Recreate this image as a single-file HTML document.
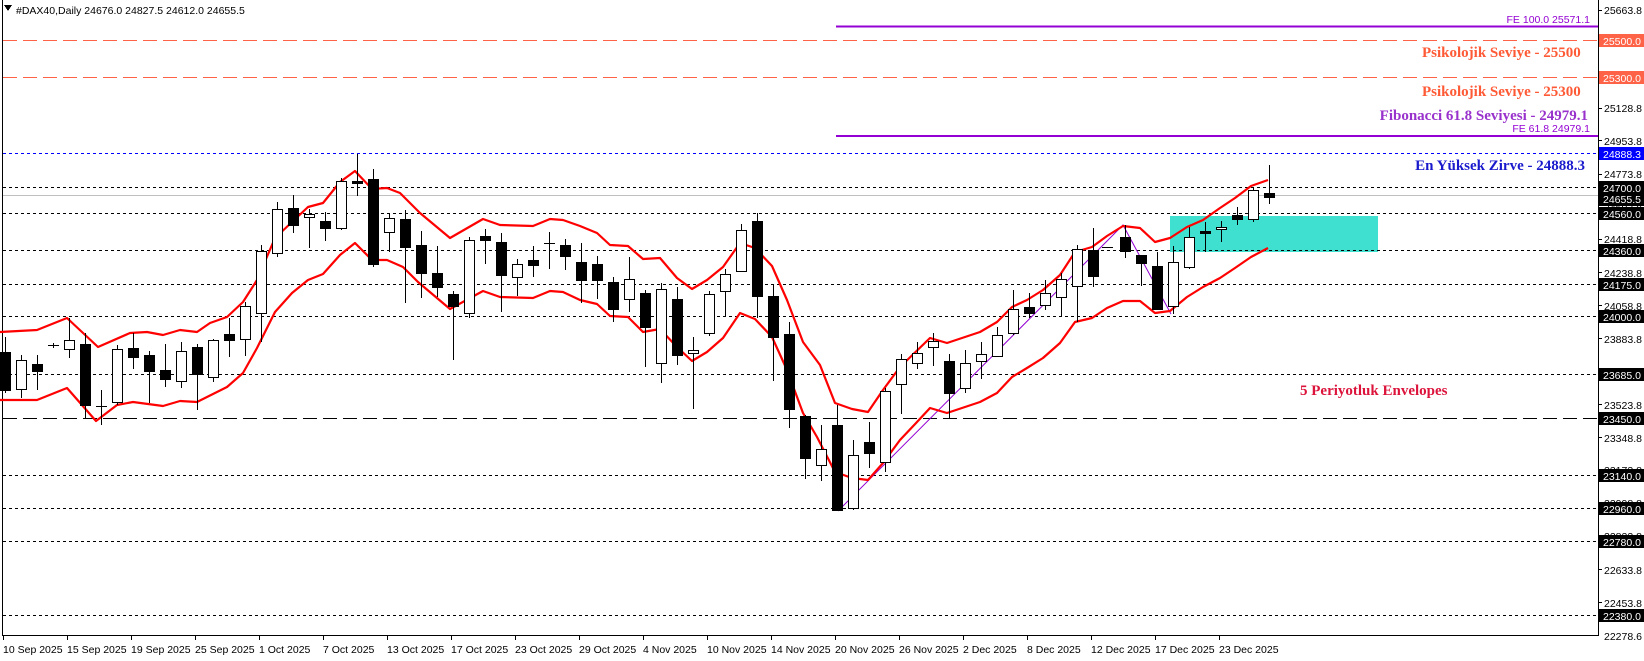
<!DOCTYPE html>
<html><head><meta charset="utf-8"><style>
html,body{margin:0;padding:0;background:#fff;width:1644px;height:661px;overflow:hidden}
svg{display:block}
text{font-family:"Liberation Sans",sans-serif;font-size:10.5px;fill:#000}
.ann{font-family:"Liberation Serif",serif;font-weight:bold;font-size:15px}
</style></head><body>
<svg width="1644" height="661" viewBox="0 0 1644 661" xmlns="http://www.w3.org/2000/svg" shape-rendering="crispEdges">
<rect width="1644" height="661" fill="#fff"/>
<line x1="2.5" y1="0" x2="2.5" y2="635" stroke="#000"/>
<line x1="2" y1="635.5" x2="1598" y2="635.5" stroke="#000"/>
<line x1="1598.5" y1="0" x2="1598.5" y2="636" stroke="#000"/>

<rect x="1170" y="216" width="208" height="36" fill="#40e0d0"/>

<g stroke-width="1" fill="none">
<line x1="836" y1="26.5" x2="1598" y2="26.5" stroke="#9400d3" stroke-width="2"/>
<line x1="3" y1="40.5" x2="1598" y2="40.5" stroke="#ff6347" stroke-dasharray="14,6"/>
<line x1="3" y1="77.5" x2="1598" y2="77.5" stroke="#ff6347" stroke-dasharray="14,6"/>
<line x1="836" y1="136" x2="1598" y2="136" stroke="#9400d3" stroke-width="2"/>
<line x1="3" y1="153.5" x2="1598" y2="153.5" stroke="#0000ff" stroke-dasharray="3,3"/>
<line x1="3" y1="187.5" x2="1598" y2="187.5" stroke="#000" stroke-dasharray="3,3"/>
<line x1="3" y1="195.5" x2="1598" y2="195.5" stroke="#c0c0c0"/>
<line x1="3" y1="213.5" x2="1598" y2="213.5" stroke="#000" stroke-dasharray="3,3"/>
<line x1="3" y1="250.5" x2="1598" y2="250.5" stroke="#000" stroke-dasharray="3,3"/>
<line x1="3" y1="284.5" x2="1598" y2="284.5" stroke="#000" stroke-dasharray="3,3"/>
<line x1="3" y1="316.5" x2="1598" y2="316.5" stroke="#000" stroke-dasharray="3,3"/>
<line x1="3" y1="374.5" x2="1598" y2="374.5" stroke="#000" stroke-dasharray="3,3"/>
<line x1="3" y1="418.5" x2="1598" y2="418.5" stroke="#000" stroke-dasharray="14,6"/>
<line x1="3" y1="475.5" x2="1598" y2="475.5" stroke="#000" stroke-dasharray="3,3"/>
<line x1="3" y1="508.5" x2="1598" y2="508.5" stroke="#000" stroke-dasharray="3,3"/>
<line x1="3" y1="541.5" x2="1598" y2="541.5" stroke="#000" stroke-dasharray="3,3"/>
<line x1="3" y1="615.5" x2="1598" y2="615.5" stroke="#000" stroke-dasharray="3,3"/>
</g>

<polyline points="838,511 1123,225 1171,314" fill="none" stroke="#9400d3" stroke-width="1" shape-rendering="auto"/>

<g fill="none" stroke="#ff0000" stroke-width="2.2" shape-rendering="auto" stroke-linejoin="round">
<polyline points="0,332 37,330 67,318 98,347 130,333 147,332 163,335 180,330 197,332 210,323 227,317 243,302 257,280 275,238 308,207 323,203 340,182 355,171 372,189 387,188 400,193 420,213 450,238 483,219 500,225 533,226 550,219 563,220 580,226 597,233 610,245 628,246 643,259 660,258 677,278 692,289 707,280 723,267 740,243 755,248 772,266 787,300 803,342 820,365 835,403 852,409 868,412 883,390 900,367 930,338 947,343 980,332 997,322 1012,307 1027,300 1043,290 1060,275 1075,252 1092,247 1107,236 1123,226 1140,228 1155,242 1170,238 1187,227 1203,220 1220,208 1235,198 1251,186 1268,180"/>
<polyline points="0,400 37,400 67,388 96,421 117,405 133,402 163,406 180,401 197,402 227,387 243,373 257,348 275,312 292,293 308,280 323,274 340,255 355,243 372,260 387,260 403,267 418,282 450,309 483,291 500,297 533,298 550,291 563,292 580,300 597,304 610,316 628,317 643,332 660,329 677,347 692,361 707,352 723,338 740,313 755,319 772,337 787,370 803,413 817,437 835,472 852,478 868,480 883,463 900,440 917,422 930,408 947,413 980,402 997,393 1012,377 1027,368 1043,358 1060,343 1075,322 1092,318 1107,308 1123,301 1140,301 1155,313 1170,311 1187,297 1203,287 1220,278 1235,268 1251,257 1268,248"/>
</g>

<g stroke="#000" stroke-width="1">
<line x1="5.5" y1="337" x2="5.5" y2="393"/><rect x="0.5" y="352.5" width="10" height="38" fill="#000"/>
<line x1="21.5" y1="355" x2="21.5" y2="398"/><rect x="16.5" y="360.5" width="10" height="29" fill="#fff"/>
<line x1="37.5" y1="355" x2="37.5" y2="390"/><rect x="32.5" y="364.5" width="10" height="7" fill="#000"/>
<line x1="53.5" y1="343" x2="53.5" y2="348"/><line x1="48" y1="345.5" x2="59" y2="345.5"/>
<line x1="69.5" y1="318" x2="69.5" y2="358"/><rect x="64.5" y="340.5" width="10" height="9" fill="#fff"/>
<line x1="85.5" y1="333" x2="85.5" y2="419"/><rect x="80.5" y="344.5" width="10" height="61" fill="#000"/>
<line x1="101.5" y1="390" x2="101.5" y2="425"/><line x1="96" y1="406.5" x2="107" y2="406.5"/>
<line x1="117.5" y1="345" x2="117.5" y2="405"/><rect x="112.5" y="349.5" width="10" height="53" fill="#fff"/>
<line x1="133.5" y1="333" x2="133.5" y2="369"/><rect x="128.5" y="348.5" width="10" height="9" fill="#000"/>
<line x1="149.5" y1="351" x2="149.5" y2="403"/><rect x="144.5" y="355.5" width="10" height="16" fill="#000"/>
<line x1="165.5" y1="344" x2="165.5" y2="387"/><rect x="160.5" y="370.5" width="10" height="9" fill="#000"/>
<line x1="181.5" y1="342" x2="181.5" y2="388"/><rect x="176.5" y="351.5" width="10" height="30" fill="#fff"/>
<line x1="197.5" y1="344" x2="197.5" y2="410"/><rect x="192.5" y="347.5" width="10" height="27" fill="#000"/>
<line x1="213.5" y1="339" x2="213.5" y2="382"/><rect x="208.5" y="340.5" width="10" height="37" fill="#fff"/>
<line x1="229.5" y1="318" x2="229.5" y2="357"/><rect x="224.5" y="334.5" width="10" height="6" fill="#000"/>
<line x1="245.5" y1="302" x2="245.5" y2="356"/><rect x="240.5" y="306.5" width="10" height="33" fill="#fff"/>
<line x1="261.5" y1="245" x2="261.5" y2="342"/><rect x="256.5" y="251.5" width="10" height="62" fill="#fff"/>
<line x1="277.5" y1="202" x2="277.5" y2="257"/><rect x="272.5" y="209.5" width="10" height="44" fill="#fff"/>
<line x1="293.5" y1="195" x2="293.5" y2="233"/><rect x="288.5" y="208.5" width="10" height="17" fill="#000"/>
<line x1="309.5" y1="209" x2="309.5" y2="248"/><rect x="304.5" y="214.5" width="10" height="3" fill="#fff"/>
<line x1="325.5" y1="212" x2="325.5" y2="241"/><rect x="320.5" y="221.5" width="10" height="7" fill="#000"/>
<line x1="341.5" y1="178" x2="341.5" y2="230"/><rect x="336.5" y="181.5" width="10" height="47" fill="#fff"/>
<line x1="357.5" y1="154" x2="357.5" y2="196"/><rect x="352.5" y="181.5" width="10" height="2" fill="#000"/>
<line x1="373.5" y1="169" x2="373.5" y2="267"/><rect x="368.5" y="179.5" width="10" height="85" fill="#000"/>
<line x1="389.5" y1="214" x2="389.5" y2="252"/><rect x="384.5" y="218.5" width="10" height="14" fill="#fff"/>
<line x1="405.5" y1="210" x2="405.5" y2="303"/><rect x="400.5" y="219.5" width="10" height="28" fill="#000"/>
<line x1="421.5" y1="231" x2="421.5" y2="298"/><rect x="416.5" y="245.5" width="10" height="28" fill="#000"/>
<line x1="437.5" y1="246" x2="437.5" y2="297"/><rect x="432.5" y="273.5" width="10" height="14" fill="#000"/>
<line x1="453.5" y1="291" x2="453.5" y2="360"/><rect x="448.5" y="294.5" width="10" height="12" fill="#000"/>
<line x1="469.5" y1="237" x2="469.5" y2="318"/><rect x="464.5" y="240.5" width="10" height="73" fill="#fff"/>
<line x1="485.5" y1="229" x2="485.5" y2="264"/><rect x="480.5" y="236.5" width="10" height="4" fill="#000"/>
<line x1="501.5" y1="233" x2="501.5" y2="312"/><rect x="496.5" y="242.5" width="10" height="33" fill="#000"/>
<line x1="517.5" y1="259" x2="517.5" y2="296"/><rect x="512.5" y="264.5" width="10" height="13" fill="#fff"/>
<line x1="533.5" y1="246" x2="533.5" y2="277"/><rect x="528.5" y="260.5" width="10" height="5" fill="#000"/>
<line x1="549.5" y1="232" x2="549.5" y2="269"/><line x1="544" y1="243.5" x2="555" y2="243.5"/>
<line x1="565.5" y1="239" x2="565.5" y2="270"/><rect x="560.5" y="245.5" width="10" height="11" fill="#000"/>
<line x1="581.5" y1="243" x2="581.5" y2="303"/><rect x="576.5" y="262.5" width="10" height="18" fill="#000"/>
<line x1="597.5" y1="256" x2="597.5" y2="299"/><rect x="592.5" y="264.5" width="10" height="16" fill="#000"/>
<line x1="613.5" y1="277" x2="613.5" y2="322"/><rect x="608.5" y="282.5" width="10" height="27" fill="#000"/>
<line x1="629.5" y1="257" x2="629.5" y2="312"/><rect x="624.5" y="279.5" width="10" height="20" fill="#fff"/>
<line x1="645.5" y1="290" x2="645.5" y2="367"/><rect x="640.5" y="293.5" width="10" height="34" fill="#000"/>
<line x1="661.5" y1="283" x2="661.5" y2="383"/><rect x="656.5" y="289.5" width="10" height="74" fill="#fff"/>
<line x1="677.5" y1="287" x2="677.5" y2="365"/><rect x="672.5" y="299.5" width="10" height="56" fill="#000"/>
<line x1="693.5" y1="337" x2="693.5" y2="409"/><rect x="688.5" y="350.5" width="10" height="3" fill="#fff"/>
<line x1="709.5" y1="291" x2="709.5" y2="336"/><rect x="704.5" y="294.5" width="10" height="39" fill="#fff"/>
<line x1="725.5" y1="269" x2="725.5" y2="317"/><rect x="720.5" y="274.5" width="10" height="17" fill="#fff"/>
<line x1="741.5" y1="224" x2="741.5" y2="272"/><rect x="736.5" y="230.5" width="10" height="41" fill="#fff"/>
<line x1="757.5" y1="213" x2="757.5" y2="318"/><rect x="752.5" y="221.5" width="10" height="75" fill="#000"/>
<line x1="773.5" y1="285" x2="773.5" y2="381"/><rect x="768.5" y="296.5" width="10" height="41" fill="#000"/>
<line x1="789.5" y1="322" x2="789.5" y2="428"/><rect x="784.5" y="334.5" width="10" height="75" fill="#000"/>
<line x1="805.5" y1="415" x2="805.5" y2="479"/><rect x="800.5" y="416.5" width="10" height="42" fill="#000"/>
<line x1="821.5" y1="425" x2="821.5" y2="481"/><rect x="816.5" y="449.5" width="10" height="16" fill="#fff"/>
<line x1="837.5" y1="405" x2="837.5" y2="511"/><rect x="832.5" y="425.5" width="10" height="85" fill="#000"/>
<line x1="853.5" y1="440" x2="853.5" y2="510"/><rect x="848.5" y="455.5" width="10" height="53" fill="#fff"/>
<line x1="869.5" y1="422" x2="869.5" y2="468"/><rect x="864.5" y="442.5" width="10" height="11" fill="#000"/>
<line x1="885.5" y1="388" x2="885.5" y2="472"/><rect x="880.5" y="391.5" width="10" height="71" fill="#fff"/>
<line x1="901.5" y1="354" x2="901.5" y2="414"/><rect x="896.5" y="359.5" width="10" height="25" fill="#fff"/>
<line x1="917.5" y1="342" x2="917.5" y2="369"/><rect x="912.5" y="353.5" width="10" height="10" fill="#fff"/>
<line x1="933.5" y1="333" x2="933.5" y2="366"/><rect x="928.5" y="341.5" width="10" height="6" fill="#fff"/>
<line x1="949.5" y1="354" x2="949.5" y2="418"/><rect x="944.5" y="361.5" width="10" height="32" fill="#000"/>
<line x1="965.5" y1="350" x2="965.5" y2="393"/><rect x="960.5" y="363.5" width="10" height="25" fill="#fff"/>
<line x1="981.5" y1="342" x2="981.5" y2="379"/><rect x="976.5" y="354.5" width="10" height="7" fill="#fff"/>
<line x1="997.5" y1="327" x2="997.5" y2="357"/><rect x="992.5" y="335.5" width="10" height="21" fill="#fff"/>
<line x1="1013.5" y1="290" x2="1013.5" y2="335"/><rect x="1008.5" y="309.5" width="10" height="24" fill="#fff"/>
<line x1="1029.5" y1="293" x2="1029.5" y2="318"/><rect x="1024.5" y="307.5" width="10" height="6" fill="#000"/>
<line x1="1045.5" y1="280" x2="1045.5" y2="310"/><rect x="1040.5" y="293.5" width="10" height="12" fill="#fff"/>
<line x1="1061.5" y1="273" x2="1061.5" y2="316"/><rect x="1056.5" y="279.5" width="10" height="18" fill="#fff"/>
<line x1="1077.5" y1="245" x2="1077.5" y2="322"/><rect x="1072.5" y="249.5" width="10" height="37" fill="#fff"/>
<line x1="1093.5" y1="228" x2="1093.5" y2="287"/><rect x="1088.5" y="250.5" width="10" height="26" fill="#000"/>
<line x1="1102" y1="247.5" x2="1113" y2="247.5"/>
<line x1="1125.5" y1="225" x2="1125.5" y2="258"/><rect x="1120.5" y="237.5" width="10" height="14" fill="#000"/>
<line x1="1141.5" y1="255" x2="1141.5" y2="286"/><rect x="1136.5" y="255.5" width="10" height="8" fill="#000"/>
<line x1="1157.5" y1="252" x2="1157.5" y2="310"/><rect x="1152.5" y="266.5" width="10" height="43" fill="#000"/>
<line x1="1173.5" y1="246" x2="1173.5" y2="314"/><rect x="1168.5" y="262.5" width="10" height="44" fill="#fff"/>
<line x1="1189.5" y1="227" x2="1189.5" y2="269"/><rect x="1184.5" y="237.5" width="10" height="30" fill="#fff"/>
<line x1="1205.5" y1="222" x2="1205.5" y2="252"/><rect x="1200.5" y="231.5" width="10" height="2" fill="#000"/>
<line x1="1221.5" y1="221" x2="1221.5" y2="242"/><rect x="1216.5" y="227.5" width="10" height="2" fill="#fff"/>
<line x1="1237.5" y1="207" x2="1237.5" y2="225"/><rect x="1232.5" y="215.5" width="10" height="4" fill="#000"/>
<line x1="1253.5" y1="187" x2="1253.5" y2="222"/><rect x="1248.5" y="190.5" width="10" height="29" fill="#fff"/>
<line x1="1269.5" y1="165" x2="1269.5" y2="204"/><rect x="1264.5" y="193.5" width="10" height="4" fill="#000"/>
</g>

<text x="1590" y="23" text-anchor="end" style="fill:#9400d3;font-size:10.5px">FE 100.0  25571.1</text>
<text x="1590" y="132" text-anchor="end" style="fill:#9400d3;font-size:10.5px">FE 61.8 24979.1</text>
<text class="ann" x="1422" y="57" style="fill:#ff5a36">Psikolojik Seviye - 25500</text>
<text class="ann" x="1422" y="96" style="fill:#ff5a36">Psikolojik Seviye - 25300</text>
<text class="ann" x="1588" y="120" text-anchor="end" style="fill:#9932cc">Fibonacci 61.8 Seviyesi - 24979.1</text>
<text class="ann" x="1585" y="170" text-anchor="end" style="fill:#1a1acd">En Yüksek Zirve - 24888.3</text>
<text class="ann" x="1300" y="395" style="fill:#dc143c">5 Periyotluk Envelopes</text>

<polygon points="4,5 12,5 8,11" fill="#000"/>
<text x="16" y="14">#DAX40,Daily  24676.0 24827.5 24612.0 24655.5</text>

<g>
<g stroke="#000">
<line x1="1598" y1="10.5" x2="1602" y2="10.5"/><line x1="1598" y1="108.5" x2="1602" y2="108.5"/><line x1="1598" y1="140.5" x2="1602" y2="140.5"/><line x1="1598" y1="174.5" x2="1602" y2="174.5"/><line x1="1598" y1="239.5" x2="1602" y2="239.5"/><line x1="1598" y1="272.5" x2="1602" y2="272.5"/><line x1="1598" y1="305.5" x2="1602" y2="305.5"/><line x1="1598" y1="338.5" x2="1602" y2="338.5"/><line x1="1598" y1="404.5" x2="1602" y2="404.5"/><line x1="1598" y1="437.5" x2="1602" y2="437.5"/><line x1="1598" y1="569.5" x2="1602" y2="569.5"/><line x1="1598" y1="602.5" x2="1602" y2="602.5"/>
</g>
<text x="1604" y="14">25663.8</text>
<text x="1604" y="112">25128.8</text>
<text x="1604" y="145">24953.8</text>
<text x="1604" y="178">24773.8</text>
<text x="1604" y="211">24592.8</text>
<text x="1604" y="243">24418.8</text>
<text x="1604" y="277">24238.8</text>
<text x="1604" y="310">24058.8</text>
<text x="1604" y="343">23883.8</text>
<text x="1604" y="409">23523.8</text>
<text x="1604" y="442">23348.8</text>
<text x="1604" y="474">23173.8</text>
<text x="1604" y="507">22998.8</text>
<text x="1604" y="540">22823.8</text>
<text x="1604" y="574">22633.8</text>
<text x="1604" y="607">22453.8</text>
<text x="1604" y="640">22278.6</text>
<rect x="1599" y="34" width="45" height="13" fill="#ff6347"/><text x="1603" y="45" style="fill:#fff">25500.0</text>
<rect x="1599" y="71" width="45" height="13" fill="#ff6347"/><text x="1603" y="82" style="fill:#fff">25300.0</text>
<rect x="1599" y="147" width="45" height="13" fill="#0000ff"/><text x="1603" y="158" style="fill:#fff">24888.3</text>
<rect x="1599" y="181" width="45" height="13" fill="#000"/><text x="1603" y="192" style="fill:#fff">24700.0</text>
<rect x="1599" y="193" width="45" height="13" fill="#000"/><text x="1603" y="203" style="fill:#fff">24655.5</text>
<rect x="1599" y="207" width="45" height="13" fill="#000"/><text x="1603" y="218" style="fill:#fff">24560.0</text>
<rect x="1599" y="244" width="45" height="13" fill="#000"/><text x="1603" y="255" style="fill:#fff">24360.0</text>
<rect x="1599" y="278" width="45" height="13" fill="#000"/><text x="1603" y="289" style="fill:#fff">24175.0</text>
<rect x="1599" y="310" width="45" height="13" fill="#000"/><text x="1603" y="321" style="fill:#fff">24000.0</text>
<rect x="1599" y="368" width="45" height="13" fill="#000"/><text x="1603" y="379" style="fill:#fff">23685.0</text>
<rect x="1599" y="412" width="45" height="13" fill="#000"/><text x="1603" y="423" style="fill:#fff">23450.0</text>
<rect x="1599" y="469" width="45" height="13" fill="#000"/><text x="1603" y="480" style="fill:#fff">23140.0</text>
<rect x="1599" y="502" width="45" height="13" fill="#000"/><text x="1603" y="513" style="fill:#fff">22960.0</text>
<rect x="1599" y="535" width="45" height="13" fill="#000"/><text x="1603" y="546" style="fill:#fff">22780.0</text>
<rect x="1599" y="609" width="45" height="13" fill="#000"/><text x="1603" y="620" style="fill:#fff">22380.0</text>
</g>

<g stroke="#000">
<line x1="3.5" y1="635" x2="3.5" y2="640"/><line x1="67.5" y1="635" x2="67.5" y2="640"/><line x1="131.5" y1="635" x2="131.5" y2="640"/><line x1="195.5" y1="635" x2="195.5" y2="640"/><line x1="259.5" y1="635" x2="259.5" y2="640"/><line x1="323.5" y1="635" x2="323.5" y2="640"/><line x1="387.5" y1="635" x2="387.5" y2="640"/><line x1="451.5" y1="635" x2="451.5" y2="640"/><line x1="515.5" y1="635" x2="515.5" y2="640"/><line x1="579.5" y1="635" x2="579.5" y2="640"/><line x1="643.5" y1="635" x2="643.5" y2="640"/><line x1="707.5" y1="635" x2="707.5" y2="640"/><line x1="771.5" y1="635" x2="771.5" y2="640"/><line x1="835.5" y1="635" x2="835.5" y2="640"/><line x1="899.5" y1="635" x2="899.5" y2="640"/><line x1="963.5" y1="635" x2="963.5" y2="640"/><line x1="1027.5" y1="635" x2="1027.5" y2="640"/><line x1="1091.5" y1="635" x2="1091.5" y2="640"/><line x1="1155.5" y1="635" x2="1155.5" y2="640"/><line x1="1219.5" y1="635" x2="1219.5" y2="640"/>
</g>
<g>
<text x="3" y="653">10 Sep 2025</text>
<text x="67" y="653">15 Sep 2025</text>
<text x="131" y="653">19 Sep 2025</text>
<text x="195" y="653">25 Sep 2025</text>
<text x="259" y="653">1 Oct 2025</text>
<text x="323" y="653">7 Oct 2025</text>
<text x="387" y="653">13 Oct 2025</text>
<text x="451" y="653">17 Oct 2025</text>
<text x="515" y="653">23 Oct 2025</text>
<text x="579" y="653">29 Oct 2025</text>
<text x="643" y="653">4 Nov 2025</text>
<text x="707" y="653">10 Nov 2025</text>
<text x="771" y="653">14 Nov 2025</text>
<text x="835" y="653">20 Nov 2025</text>
<text x="899" y="653">26 Nov 2025</text>
<text x="963" y="653">2 Dec 2025</text>
<text x="1027" y="653">8 Dec 2025</text>
<text x="1091" y="653">12 Dec 2025</text>
<text x="1155" y="653">17 Dec 2025</text>
<text x="1219" y="653">23 Dec 2025</text>
</g>
</svg>
</body></html>
